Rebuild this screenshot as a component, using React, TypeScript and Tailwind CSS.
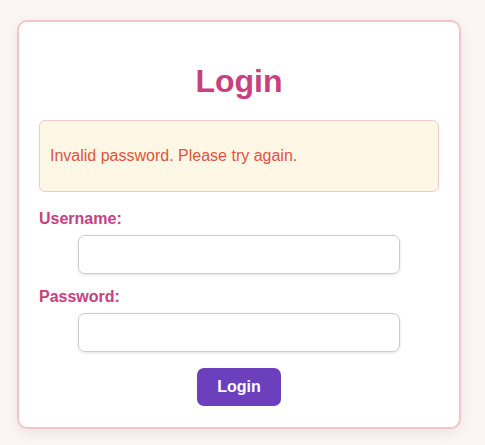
import { useState } from "react";

export default function App() {
  const [username, setUsername] = useState("");
  const [password, setPassword] = useState("");
  const [error] = useState("Invalid password. Please try again.");

  return (
    <div className="min-h-[445px] bg-[#fcf5f5] pt-[20px] font-['Liberation_Sans',Arial,sans-serif]">
      <div className="ml-[17px] w-[444px] rounded-[10px] border-2 border-[#f5c4c9] bg-white px-[20px] pt-[41px] pb-[21px] shadow-[0_4px_14px_rgba(0,0,0,0.07)]">
        <h2 className="mb-[20px] text-center text-[32px] font-bold leading-[37px] text-[#c8407f]">
          Login
        </h2>

        {error && (
          <div className="mb-[18px] rounded-[6px] border border-[#f4c8cc] bg-[#fff7e6] px-[10px] py-[26px]">
            <p className="text-[16px] leading-[18px] text-[#df543c]">{error}</p>
          </div>
        )}

        <form onSubmit={(e) => e.preventDefault()}>
          <label className="block text-[16px] font-bold leading-[18px] text-[#c8407f]">
            Username:
          </label>
          <input
            type="text"
            value={username}
            onChange={(e) => setUsername(e.target.value)}
            className="mx-auto mt-[7px] block h-[39px] w-[322px] rounded-[7px] border border-[#cccccc] px-2 shadow-[0_1px_3px_rgba(0,0,0,0.12)] outline-none"
          />

          <label className="mt-[14px] block text-[16px] font-bold leading-[18px] text-[#c8407f]">
            Password:
          </label>
          <input
            type="password"
            value={password}
            onChange={(e) => setPassword(e.target.value)}
            className="mx-auto mt-[7px] block h-[39px] w-[322px] rounded-[7px] border border-[#cccccc] px-2 shadow-[0_1px_3px_rgba(0,0,0,0.12)] outline-none"
          />

          <button
            type="submit"
            className="mx-auto mt-[16px] block h-[38px] rounded-[7px] bg-[#6c3fbd] px-[20px] text-[16px] font-bold leading-[18px] text-white"
          >
            Login
          </button>
        </form>
      </div>
    </div>
  );
}
